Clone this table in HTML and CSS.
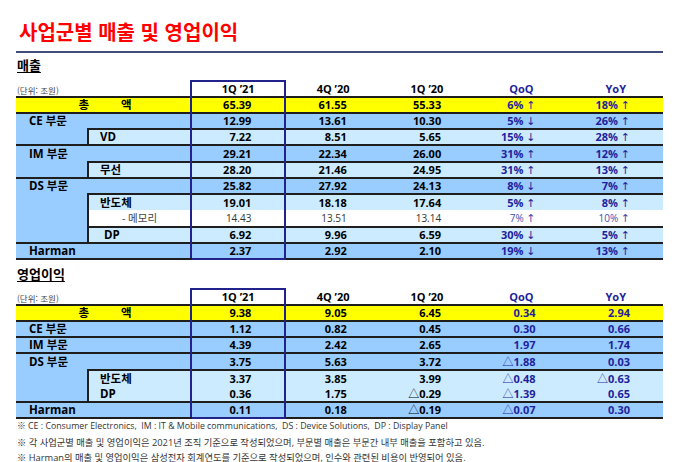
FILE: index.html
```html
<!DOCTYPE html>
<html lang="ko">
<head>
<meta charset="utf-8">
<title>사업군별 매출 및 영업이익</title>
<link rel="stylesheet" href="styles.css">
</head>
<body>
<div class="page">
  <h1 class="title">사업군별 매출 및 영업이익</h1>
  <div class="rule"></div>

  <h2 class="section"><span>매출</span></h2>
  <table class="fin">
    <colgroup><col class="c-grp"><col class="c-sub"><col class="c-num"><col class="c-num"><col class="c-num"><col class="c-num"><col class="c-num"></colgroup>
    <thead>
      <tr class="head"><th colspan="2" class="unit">(단위: 조원)</th><th class="hl top">1Q ’21</th><th>4Q ’20</th><th>1Q ’20</th><th class="blue">QoQ</th><th class="blue">YoY</th></tr>
    </thead>
    <tbody>
      <tr class="total g"><td colspan="2" class="tot-lbl"><span class="gap">총</span>액</td><td class="hl">65.39</td><td>61.55</td><td>55.33</td><td class="blue">6% <span class="ar">↑</span></td><td class="blue">18% <span class="ar">↑</span></td></tr>
      <tr class="main g"><td colspan="2" class="lbl">CE 부문</td><td class="hl">12.99</td><td>13.61</td><td>10.30</td><td class="blue">5% <span class="ar">↓</span></td><td class="blue">26% <span class="ar">↑</span></td></tr>
      <tr class="sub s"><td class="grp"></td><td class="sublbl">VD</td><td class="hl">7.22</td><td>8.51</td><td>5.65</td><td class="blue">15% <span class="ar">↓</span></td><td class="blue">28% <span class="ar">↑</span></td></tr>
      <tr class="main g"><td colspan="2" class="lbl">IM 부문</td><td class="hl">29.21</td><td>22.34</td><td>26.00</td><td class="blue">31% <span class="ar">↑</span></td><td class="blue">12% <span class="ar">↑</span></td></tr>
      <tr class="sub s"><td class="grp"></td><td class="sublbl">무선</td><td class="hl">28.20</td><td>21.46</td><td>24.95</td><td class="blue">31% <span class="ar">↑</span></td><td class="blue">13% <span class="ar">↑</span></td></tr>
      <tr class="main g"><td colspan="2" class="lbl">DS 부문</td><td class="hl">25.82</td><td>27.92</td><td>24.13</td><td class="blue">8% <span class="ar">↓</span></td><td class="blue">7% <span class="ar">↑</span></td></tr>
      <tr class="sub s"><td class="grp"></td><td class="sublbl">반도체</td><td class="hl">19.01</td><td>18.18</td><td>17.64</td><td class="blue">5% <span class="ar">↑</span></td><td class="blue">8% <span class="ar">↑</span></td></tr>
      <tr class="memo"><td class="grp"></td><td class="sublbl memo-lbl">- 메모리</td><td class="hl">14.43</td><td>13.51</td><td>13.14</td><td class="blue">7% <span class="ar">↑</span></td><td class="blue">10% <span class="ar">↑</span></td></tr>
      <tr class="sub s"><td class="grp"></td><td class="sublbl ind">DP</td><td class="hl">6.92</td><td>9.96</td><td>6.59</td><td class="blue">30% <span class="ar">↓</span></td><td class="blue">5% <span class="ar">↑</span></td></tr>
      <tr class="main g last"><td colspan="2" class="lbl">Harman</td><td class="hl">2.37</td><td>2.92</td><td>2.10</td><td class="blue">19% <span class="ar">↓</span></td><td class="blue">13% <span class="ar">↑</span></td></tr>
    </tbody>
  </table>

  <h2 class="section second"><span>영업이익</span></h2>
  <table class="fin">
    <colgroup><col class="c-grp"><col class="c-sub"><col class="c-num"><col class="c-num"><col class="c-num"><col class="c-num"><col class="c-num"></colgroup>
    <thead>
      <tr class="head"><th colspan="2" class="unit">(단위: 조원)</th><th class="hl top">1Q ’21</th><th>4Q ’20</th><th>1Q ’20</th><th class="blue">QoQ</th><th class="blue">YoY</th></tr>
    </thead>
    <tbody>
      <tr class="total g"><td colspan="2" class="tot-lbl"><span class="gap">총</span>액</td><td class="hl">9.38</td><td>9.05</td><td>6.45</td><td class="blue">0.34</td><td class="blue">2.94</td></tr>
      <tr class="main g"><td colspan="2" class="lbl">CE 부문</td><td class="hl">1.12</td><td>0.82</td><td>0.45</td><td class="blue">0.30</td><td class="blue">0.66</td></tr>
      <tr class="main g"><td colspan="2" class="lbl">IM 부문</td><td class="hl">4.39</td><td>2.42</td><td>2.65</td><td class="blue">1.97</td><td class="blue">1.74</td></tr>
      <tr class="main g"><td colspan="2" class="lbl">DS 부문</td><td class="hl">3.75</td><td>5.63</td><td>3.72</td><td class="blue"><span class="tri">△</span>1.88</td><td class="blue">0.03</td></tr>
      <tr class="sub s"><td class="grp"></td><td class="sublbl">반도체</td><td class="hl">3.37</td><td>3.85</td><td>3.99</td><td class="blue"><span class="tri">△</span>0.48</td><td class="blue"><span class="tri">△</span>0.63</td></tr>
      <tr class="sub"><td class="grp"></td><td class="sublbl">DP</td><td class="hl">0.36</td><td>1.75</td><td><span class="tri">△</span>0.29</td><td class="blue"><span class="tri">△</span>1.39</td><td class="blue">0.65</td></tr>
      <tr class="main g last"><td colspan="2" class="lbl">Harman</td><td class="hl">0.11</td><td>0.18</td><td><span class="tri">△</span>0.19</td><td class="blue"><span class="tri">△</span>0.07</td><td class="blue">0.30</td></tr>
    </tbody>
  </table>

  <div class="notes">
    <p class="en">※ CE : Consumer Electronics,&nbsp; IM : IT &amp; Mobile communications,&nbsp; DS : Device Solutions,&nbsp; DP : Display Panel</p>
    <p>※ 각 사업군별 매출 및 영업이익은 2021년 조직 기준으로 작성되었으며, 부문별 매출은 부문간 내부 매출을 포함하고 있음.</p>
    <p>※ Harman의 매출 및 영업이익은 삼성전자 회계연도를 기준으로 작성되었으며, 인수와 관련된 비용이 반영되어 있음.</p>
  </div>
</div>
</body>
</html>
```

FILE: styles.css
```css
* { box-sizing: border-box; }
html, body { margin: 0; padding: 0; background: #ffffff; }
body {
  font-family: "Open Sans", "Noto Sans CJK KR", sans-serif;
  color: #000;
}
.page {
  width: 680px;
  height: 462px;
  padding: 20px 17px 0 16px;
  overflow: hidden;
}
.title {
  margin: 0 0 0 3px;
  font: bold 20px/24px "Noto Sans CJK KR", sans-serif;
  color: #ff0000;
}
.rule {
  margin-top: 7px;
  border-top: 2px solid #3f4f7c;
}
.section {
  margin: 4px 0 7px 1px;
  font: bold 13px/16px "Noto Sans CJK KR", sans-serif;
}
.section span {
  text-decoration: underline;
  text-underline-offset: 2px;
  text-decoration-thickness: 1px;
}
.section.second { margin-top: 6px; margin-bottom: 6px; }

.fin {
  width: 647px;
  border-collapse: collapse;
  table-layout: fixed;
  font-weight: bold;
  font-size: 11px;
}
.c-grp { width: 72px; }
.c-sub { width: 103px; }
.c-num { width: 94.4px; }
.fin tr { height: 16px; }
.fin tbody tr:nth-child(4n) { height: 17px; }
.fin th, .fin td {
  padding: 0 33px 0 0;
  line-height: 12px;
  white-space: nowrap;
  text-align: right;
  vertical-align: middle;
}
.fin th { text-align: center; padding: 0; font-size: 11px; }
.fin th.unit {
  text-align: left;
  font: normal 8.5px/12px "Noto Sans CJK KR", sans-serif;
  color: #444;
  padding-left: 1px;
  padding-top: 2px;
}
.blue { color: #1f1f9c; }
.fin th.blue { color: #1f1f9c; }
.ar { font-family: "DejaVu Sans", sans-serif; font-weight: normal; font-size: 11px; line-height: 10px; }
.tri { font-family: "Noto Sans CJK KR", sans-serif; font-weight: normal; font-size: 11px; line-height: 10px; }

/* box around the current quarter */
.fin .hl { border-left: 2px solid #22228c; border-right: 2px solid #22228c; }
.fin .hl.top { border-top: 2px solid #22228c; background: #fff; }
.fin tr.last td.hl { border-bottom: 2px solid #22228c; }

/* row backgrounds */
.total td { background: #ffff00; }
.main td { background: #99ccff; }
.sub td { background: #ccebff; }
.memo td { background: #ffffff; }
.fin td.grp { background: #99ccff; }

/* row separators */
.g td { border-top: 2px solid #1e1e1e; }
.s td:not(.grp) { border-top: 2px solid #1e1e1e; }
.last td { border-bottom: 2px solid #1e1e1e; }
.fin td.sublbl { border-left: 2px solid #1e1e1e; }

/* labels */
.fin td.lbl, .fin td.sublbl, .fin td.tot-lbl {
  text-align: left;
  font-family: "Open Sans", "Noto Sans CJK KR", sans-serif;
  font-size: 11.5px;
}
.fin td.lbl { padding-left: 13px; }
.fin td.sublbl { padding-left: 11px; }
.fin td.sublbl.ind { padding-left: 15px; }
.fin td.tot-lbl { text-align: center; padding: 0 0 0 4px; }
.gap { margin-right: 32px; }

.memo td { font-weight: normal; font-size: 10px; color: #333; }
.memo td.blue { color: #4a4ab0; }
.fin td.memo-lbl { padding-left: 33px; font-weight: normal; font-size: 10.5px; color: #444; }

.notes {
  padding-left: 1px;
  font-size: 9.3px;
  line-height: 15.5px;
  color: #333;
}
.notes p { margin: 0; white-space: nowrap; }
.notes p.en { font-size: 8.8px; }
```
